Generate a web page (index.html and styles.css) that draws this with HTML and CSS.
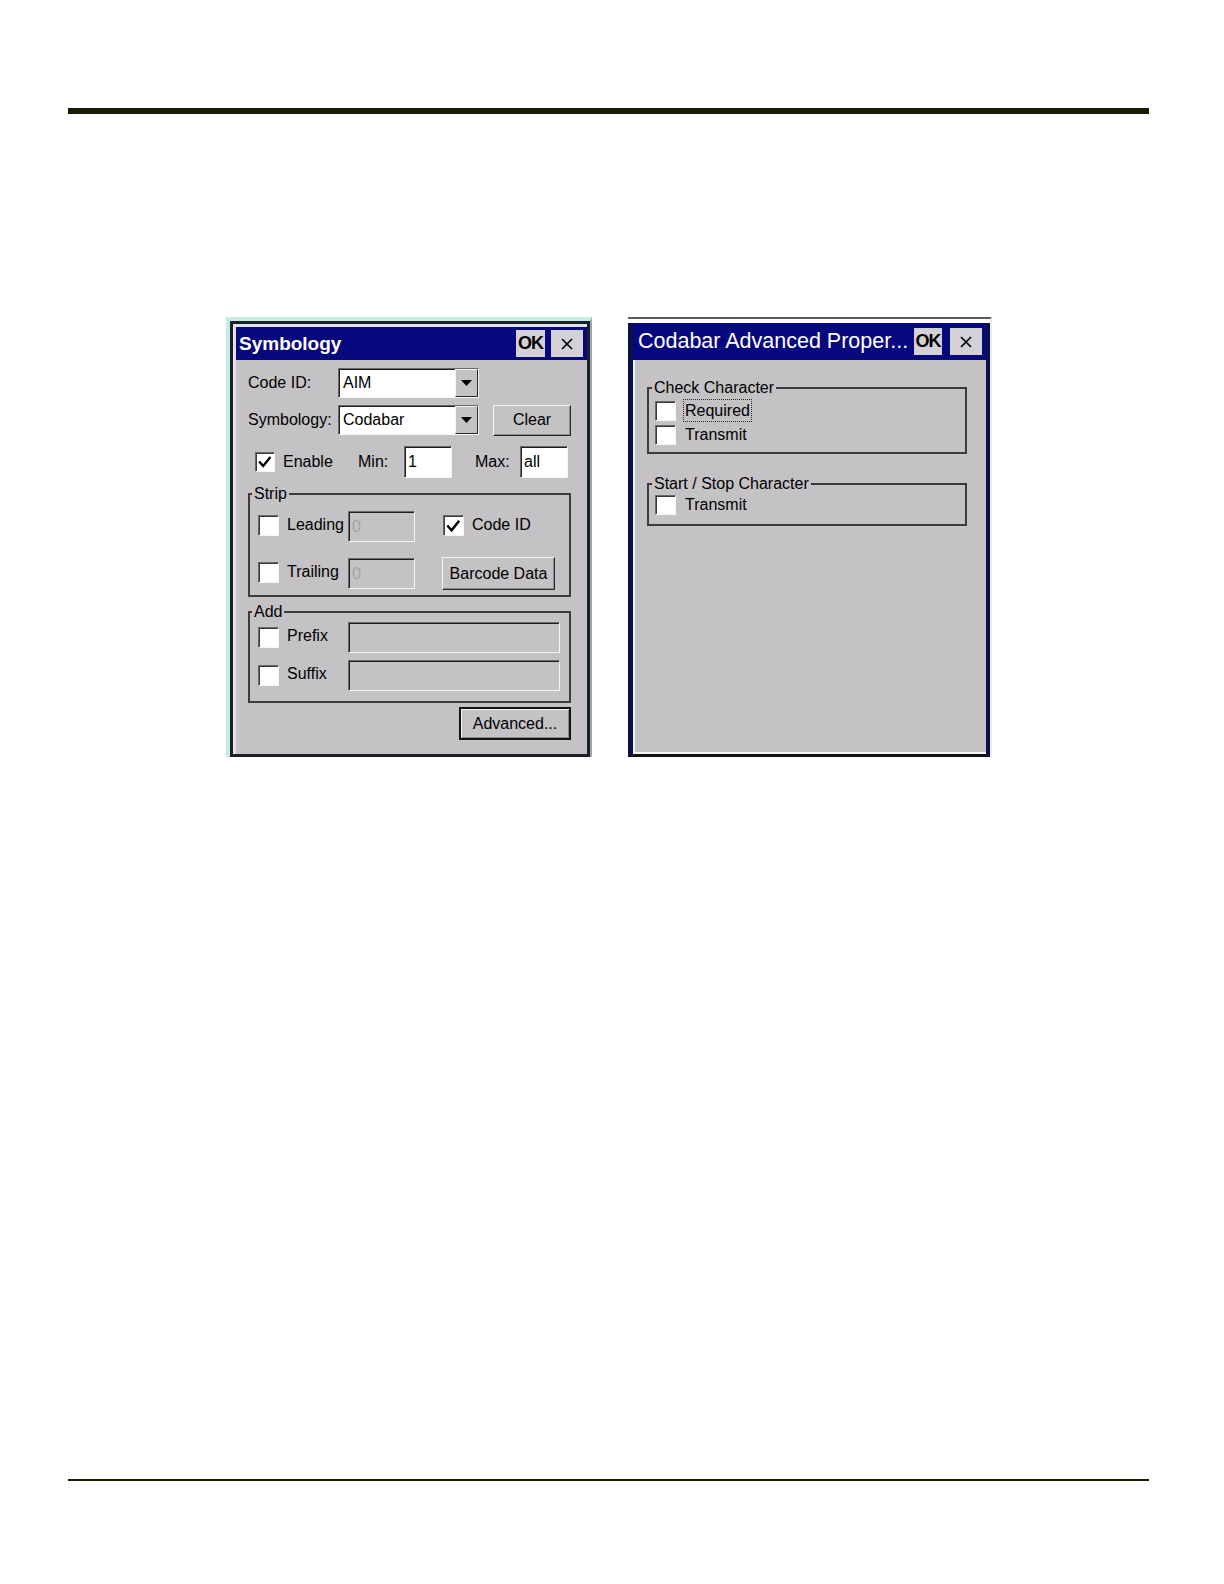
FILE: index.html
```html
<!DOCTYPE html>
<html>
<head>
<meta charset="utf-8">
<link rel="stylesheet" href="styles.css">
</head>
<body>
<div class="page">
  <div class="rule-top"></div>
  <div class="shots">
    <div class="dlg-left">
      <div class="win">
        <div class="titlebar tb-left">
          <span class="title title-bold">Symbology</span>
          <span class="tbtn ok ok-left">OK</span>
          <span class="tbtn close close-left"><svg width="14" height="14" viewBox="0 0 14 14"><path d="M2 2 L12 12 M12 2 L2 12" stroke="#000" stroke-width="1.7" fill="none"/></svg></span>
        </div>
        <div class="body body-left">
          <div class="row r1">
            <span class="lbl lbl-w">Code ID:</span>
            <div class="combo"><span class="combo-text">AIM</span><span class="drop"><svg width="11" height="7" viewBox="0 0 11 7"><polygon points="0,0 11,0 5.5,6" fill="#000"/></svg></span></div>
          </div>
          <div class="row r2">
            <span class="lbl lbl-w">Symbology:</span>
            <div class="combo"><span class="combo-text">Codabar</span><span class="drop"><svg width="11" height="7" viewBox="0 0 11 7"><polygon points="0,0 11,0 5.5,6" fill="#000"/></svg></span></div>
            <span class="btn btn-clear">Clear</span>
          </div>
          <div class="row r3">
            <span class="chk-cell enable-cell"><span class="cb cb-l"><svg width="20" height="20" viewBox="0 0 20 20"><path d="M3.5 9.5 L8 14.5 L16 4.5" stroke="#000" stroke-width="2.6" fill="none"/></svg></span><span class="cb-text">Enable</span></span>
            <span class="lbl min-lbl">Min:</span>
            <span class="field field-num">1</span>
            <span class="lbl max-lbl">Max:</span>
            <span class="field field-num">all</span>
          </div>
          <fieldset class="group strip">
            <legend>Strip</legend>
            <div class="grow row-a">
              <span class="chk-cell cell-90"><span class="cb cb-l"></span><span class="cb-text">Leading</span></span>
              <span class="field disabled w67">0</span>
              <span class="chk-cell codeid-cell"><span class="cb cb-l"><svg width="20" height="20" viewBox="0 0 20 20"><path d="M3.5 9.5 L8 14.5 L16 4.5" stroke="#000" stroke-width="2.6" fill="none"/></svg></span><span class="cb-text">Code ID</span></span>
            </div>
            <div class="grow row-b">
              <span class="chk-cell cell-90"><span class="cb cb-l"></span><span class="cb-text">Trailing</span></span>
              <span class="field disabled w67">0</span>
              <span class="btn btn-barcode">Barcode Data</span>
            </div>
          </fieldset>
          <fieldset class="group add">
            <legend>Add</legend>
            <div class="grow row-prefix">
              <span class="chk-cell cell-90"><span class="cb cb-l"></span><span class="cb-text">Prefix</span></span>
              <span class="field disabled w212"></span>
            </div>
            <div class="grow row-suffix">
              <span class="chk-cell cell-90"><span class="cb cb-l"></span><span class="cb-text">Suffix</span></span>
              <span class="field disabled w212"></span>
            </div>
          </fieldset>
          <span class="btn btn-default">Advanced...</span>
        </div>
      </div>
    </div>

    <div class="dlg-right">
      <div class="win-r">
        <div class="titlebar tb-right">
          <span class="title title-reg">Codabar Advanced Proper...</span>
          <span class="tbtn ok ok-right">OK</span>
          <span class="tbtn close close-right"><svg width="14" height="14" viewBox="0 0 14 14"><path d="M2 2 L12 12 M12 2 L2 12" stroke="#000" stroke-width="1.7" fill="none"/></svg></span>
        </div>
        <div class="body body-right">
          <fieldset class="group group-r check-group">
            <legend>Check Character</legend>
            <div class="rrow"><span class="cb cb-r"></span><span class="focus-text">Required</span></div>
            <div class="rrow rrow-2"><span class="cb cb-r"></span><span class="plain-text">Transmit</span></div>
          </fieldset>
          <fieldset class="group group-r stop-group">
            <legend>Start / Stop Character</legend>
            <div class="rrow"><span class="cb cb-r"></span><span class="plain-text">Transmit</span></div>
          </fieldset>
        </div>
      </div>
    </div>
  </div>
  <div class="rule-bottom"></div>
</div>
</body>
</html>
```

FILE: styles.css
```css
html, body {
  margin: 0;
  padding: 0;
  background: #ffffff;
}
body {
  font-family: "Liberation Sans", Arial, sans-serif;
  color: #000;
}
.page {
  width: 1224px;
  height: 1584px;
  box-sizing: border-box;
  padding-top: 108px;
  overflow: hidden;
}
.rule-top {
  margin-left: 68px;
  width: 1081px;
  height: 6px;
  background: #1b1b03;
}
.rule-bottom {
  margin-left: 68px;
  width: 1081px;
  height: 2px;
  background: #1b1b03;
  margin-top: 722px;
}
.shots {
  display: flex;
  align-items: flex-start;
  margin-top: 203px;
  padding-left: 226px;
  gap: 36px;
}

/* ---------- left dialog ---------- */
.dlg-left {
  width: 366px;
  height: 440px;
  box-sizing: border-box;
  border-style: solid;
  border-width: 4px 2px 0 4px;
  border-color: #c4ece5 #9aa8a6 #c4ece5 #c4ece5;
  background: #c4ece5;
}
.win {
  height: 100%;
  box-sizing: border-box;
  border: 3px solid #1d1d2b;
  padding: 3px 0 0 3px;
  background: #e2e2e4;
  display: flex;
  flex-direction: column;
}
.titlebar {
  display: flex;
  align-items: center;
  background: #08087e;
  flex: none;
}
.tb-left {
  height: 33px;
  padding: 0 4px 0 3px;
}
.title {
  flex: 1;
  min-width: 0;
  color: #fff;
  white-space: nowrap;
  overflow: hidden;
}
.title-bold {
  font-weight: bold;
  font-size: 19px;
}
.title-reg {
  font-size: 21.5px;
}
.tbtn {
  display: flex;
  align-items: center;
  justify-content: center;
  height: 27px;
  background: #d3d1d5;
  box-sizing: border-box;
  flex: none;
}
.ok {
  font-weight: bold;
  font-size: 18px;
  letter-spacing: -1px;
}
.ok-left { width: 29px; margin-right: 6px; }
.close-left { width: 32px; }

.body {
  flex: 1;
  background: #c4c2c5;
  display: flex;
  flex-direction: column;
}
.body-left {
  padding: 8px 16px 0 12px;
  font-size: 16px;
}
.row {
  display: flex;
  align-items: center;
}
.r1 { height: 30px; }
.r2 { height: 30px; margin-top: 7px; }
.r3 { height: 32px; margin-top: 11px; }
.lbl-w { width: 90px; flex: none; }

.combo {
  width: 141px;
  height: 30px;
  box-sizing: border-box;
  background: #fff;
  border: 1px solid;
  border-color: #6a6a6a #f6f6f6 #f6f6f6 #6a6a6a;
  box-shadow: inset 1px 1px 0 #1e1e1e;
  display: flex;
  align-items: center;
  flex: none;
}
.combo-text {
  padding-left: 4px;
}
.drop {
  margin-left: auto;
  width: 23px;
  height: 100%;
  box-sizing: border-box;
  background: #c4c2c5;
  border: 1px solid;
  border-color: #f2f2f2 #2a2a2a #2a2a2a #f2f2f2;
  display: flex;
  align-items: center;
  justify-content: center;
}

.btn {
  display: flex;
  align-items: center;
  justify-content: center;
  box-sizing: border-box;
  background: #c4c2c5;
  border: 1px solid;
  border-color: #f4f4f4 #2a2a2a #2a2a2a #f4f4f4;
  box-shadow: inset -1px -1px 0 #8a8a8a;
  flex: none;
}
.btn-clear {
  width: 78px;
  height: 31px;
  margin-left: 14px;
}
.btn-barcode {
  width: 113px;
  height: 33px;
  margin-left: 27px;
}
.btn-default {
  align-self: flex-end;
  width: 112px;
  height: 33px;
  margin-top: 4px;
  border: 2px solid #121212;
  box-shadow: inset 1px 1px 0 #f4f4f4, inset -1px -1px 0 #8a8a8a;
}

.chk-cell {
  display: flex;
  align-items: center;
  flex: none;
}
.cb {
  display: flex;
  align-items: center;
  justify-content: center;
  box-sizing: border-box;
  background: #fff;
  border: 1px solid;
  border-color: #6a6a6a #f6f6f6 #f6f6f6 #6a6a6a;
  box-shadow: inset 1px 1px 0 #3a3a3a;
  flex: none;
}
.cb-l { width: 21px; height: 21px; }
.cb-text { margin-left: 8px; }
.enable-cell { width: 103px; margin-left: 7px; }
.enable-cell .cb-l { width: 20px; height: 20px; }
.min-lbl { width: 46px; flex: none; }
.max-lbl { width: 45px; margin-left: 23px; flex: none; }

.field {
  display: flex;
  align-items: center;
  box-sizing: border-box;
  background: #fff;
  border: 1px solid;
  border-color: #6a6a6a #f6f6f6 #f6f6f6 #6a6a6a;
  box-shadow: inset 1px 1px 0 #1e1e1e;
  padding-left: 3px;
  flex: none;
}
.field-num {
  width: 48px;
  height: 32px;
}
.field.disabled {
  background: #c4c2c5;
  color: #a4a4a4;
  height: 31px;
}
.w67 { width: 67px; }
.w212 { width: 212px; }

.group {
  margin: 0;
  min-width: 0;
  border: 2px solid #3c3c3e;
}
.group legend {
  padding: 0 2px;
  margin-left: 2px;
  line-height: 18px;
}
.strip {
  margin-top: 7px;
  padding: 8px 0 5px 0;
}
.add {
  margin-top: 6px;
  padding: 1px 0 10px 0;
}
.grow {
  display: flex;
  align-items: center;
  padding-left: 8px;
}
.row-a { height: 31px; }
.row-b { height: 33px; margin-top: 15px; }
.row-prefix { height: 31px; }
.row-suffix { height: 31px; margin-top: 7px; }
.cell-90 { width: 90px; }
.codeid-cell { margin-left: 28px; }
.row-a .cb-text, .row-b .cb-text, .row-prefix .cb-text, .row-suffix .cb-text {
  margin-bottom: 3px;
}
.row-a .cb-l, .row-b .cb-l {
  margin-bottom: 2px;
}

/* ---------- right dialog ---------- */
.dlg-right {
  width: 364px;
  height: 440px;
  box-sizing: border-box;
  border-top: 2px solid #5c5c5c;
  border-right: 2px solid #ececec;
  padding-top: 4px;
  background: #fff;
}
.win-r {
  height: 100%;
  box-sizing: border-box;
  border-left: 5px solid #0c1048;
  border-right: 4px solid #0c1048;
  border-bottom: 3px solid #121218;
  display: flex;
  flex-direction: column;
}
.tb-right {
  height: 37px;
  padding: 0 4px 0 5px;
}
.ok-right { width: 28px; margin-right: 8px; }
.close-right { width: 32px; }
.body-right {
  border-left: 2px solid #f4f4f4;
  border-bottom: 2px solid #f4f4f4;
  padding: 19px 19px 0 12px;
  font-size: 16px;
}
.group-r legend {
  margin-left: 3px;
}
.check-group {
  padding: 2px 0 6px 0;
}
.stop-group {
  margin-top: 21px;
  padding: 0 0 8px 0;
}
.rrow {
  display: flex;
  align-items: center;
  height: 23px;
  padding-left: 6px;
}
.rrow-2 { margin-top: 1px; }
.cb-r { width: 21px; height: 20px; }
.focus-text {
  margin-left: 7px;
  border: 1px dotted #2a2a2a;
  padding: 1px 1px 1px 1px;
  line-height: 19px;
}
.plain-text {
  margin-left: 9px;
}
```
